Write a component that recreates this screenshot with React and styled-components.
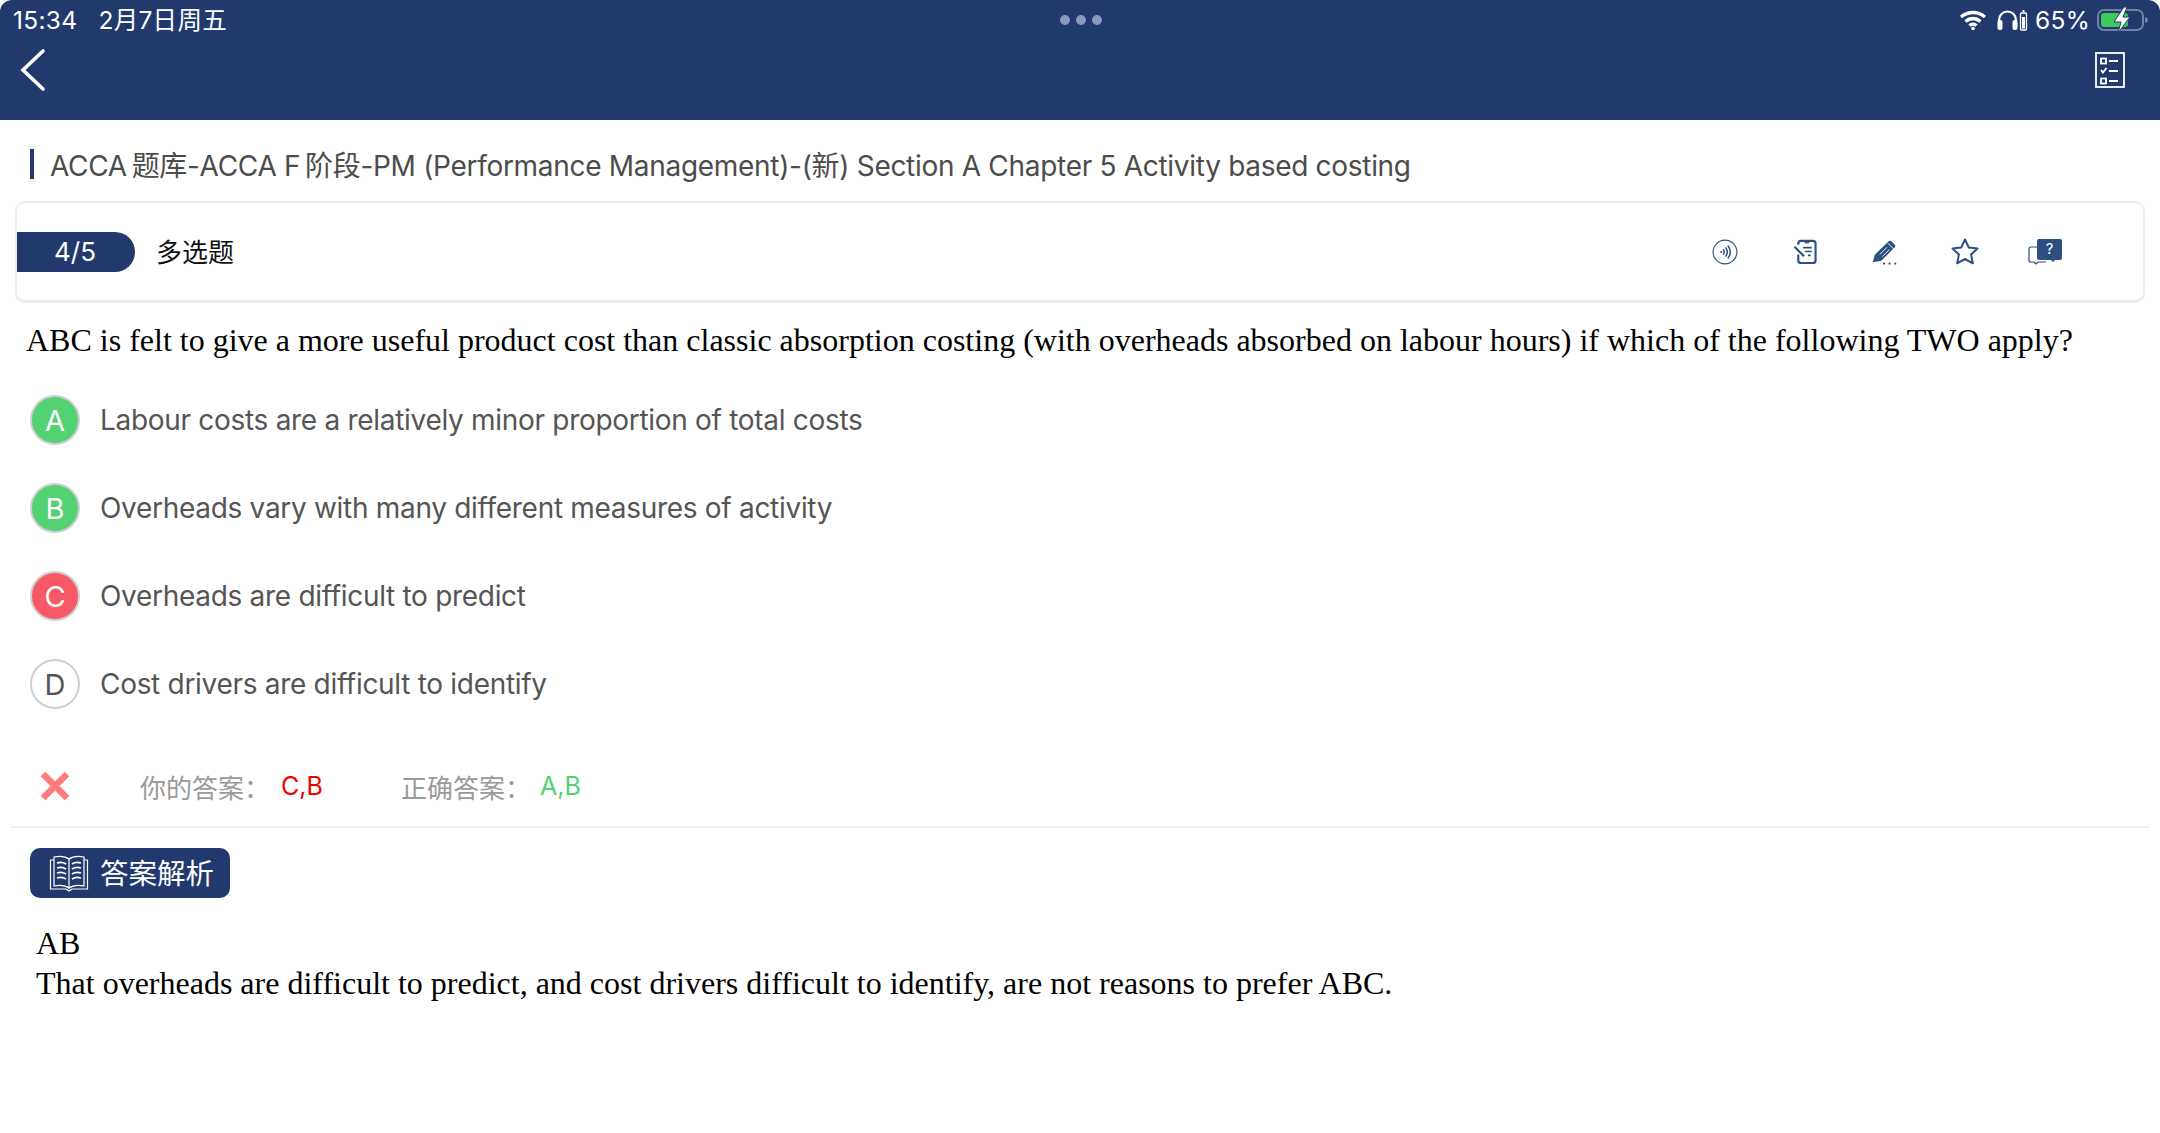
import React from "react";
import styled, { createGlobalStyle } from "styled-components";

const Global = createGlobalStyle`
  html, body { margin: 0; padding: 0; background: #fff; }
  #root { width: 2160px; height: 1133px; overflow: hidden; }
  * { box-sizing: border-box; }
`;
const SANS = `Inter, "Noto Sans CJK SC", sans-serif`;
const NAVY = "#21396d";

const Page = styled.div`
  width: 2160px; height: 1133px; background: #fff; font-family: ${SANS};
  display: flex; flex-direction: column;
`;
const Header = styled.header`
  height: 120px; background: ${NAVY}; color: #fff; display: flex; flex-direction: column;
  padding: 0 12px 0 13px; border-radius: 12px 12px 0 0;
`;
const StatusBar = styled.div`
  height: 40px; display: grid; grid-template-columns: 1fr auto 1fr; align-items: center;
  font-size: 24.500px; letter-spacing: 0.3px; line-height: 28px;
`;
const StatusLeft = styled.div`display: flex; gap: 21px; align-items: baseline; height: 28px;`;
const Dots = styled.div`
  display: flex; gap: 6px;
  & > i { width: 10px; height: 10px; border-radius: 50%; background: #8b9ab8; display: block; }
`;
const StatusRight = styled.div`
  display: flex; justify-content: flex-end; align-items: center; gap: 10px;
`;
const Percent = styled.span`margin: 0 -3px;`;
const NavBar = styled.div`
  height: 60px; display: flex; justify-content: space-between; align-items: center; padding: 0 23px 0 6px;
`;
const TitleRow = styled.div`
  height: 81px; display: flex; align-items: center; padding: 6px 0 0 30px; gap: 16px;
  font-size: 28px; letter-spacing: -0.3px; color: #4c4c4c; white-space: nowrap;
`;
const TitleBar = styled.span`width: 4px; height: 30px; background: ${NAVY}; flex: none;`;
const Card = styled.section`
  margin: 0 15px; height: 102px; border: 2px solid #eeeeee; border-bottom-width: 3px; border-radius: 10px;
  display: flex; align-items: center; justify-content: space-between; padding: 0 78px 0 0;
`;
const CardLeft = styled.div`display: flex; align-items: center; gap: 21px;`;
const Pill = styled.div`
  width: 118px; height: 40px; background: ${NAVY}; color: #fff; border-radius: 0 20px 20px 0;
  display: flex; align-items: center; justify-content: center; font-size: 26px; padding-right: 2px;
`;
const QType = styled.div`font-size: 26px; color: #111; padding-bottom: 2px;`;
const Tools = styled.div`display: flex; align-items: center; gap: 40px;`;
const Tool = styled.span`width: 40px; display: flex; justify-content: center; align-items: center;`;
const Question = styled.p`
  margin: 0; padding: 17px 0 0 26px; height: 92px; font: 32px/40px "Liberation Serif", serif; color: #000; white-space: nowrap;
`;
const Options = styled.ul`margin: 0; padding: 0 0 0 30px; list-style: none; display: flex; flex-direction: column; gap: 38px;`;
const Option = styled.li`display: flex; align-items: center; gap: 20px; height: 50px; font-size: 28px; letter-spacing: -0.3px; color: #555;`;
const Badge = styled.span`
  width: 50px; height: 50px; border-radius: 50%; border: 2px solid #cfcfcf; flex: none;
  display: flex; align-items: center; justify-content: center; font-size: 29px; letter-spacing: 0;
  background: ${p => p.$bg || "#fff"}; color: ${p => p.$bg ? "#fff" : "#555"};
`;
const Result = styled.div`
  margin: 0 10px; height: 119px; padding: 61px 0 0 30px; border-bottom: 2px solid #eef1f5;
`;
const ResultIn = styled.div`height: 32px; display: flex; align-items: center;`;
const CrossSlot = styled.span`width: 30px; height: 30px; margin-right: 70px; flex: none; display: flex;`;
const Label = styled.span`width: ${p => p.$w}px; font-size: 26px; color: #9a9a9a; flex: none;`;
const Answer = styled.span`width: 120px; font-size: 25px; color: ${p => p.$c}; flex: none;`;
const AnalysisTag = styled.div`
  margin: 20px 0 0 30px; width: 200px; height: 50px; background: ${NAVY}; color: #fff; border-radius: 10px;
  display: flex; align-items: center; gap: 11px; padding-left: 19px; font-size: 28.500px;
`;
const AnalysisLabel = styled.span`padding-bottom: 4px;`;
const Analysis = styled.div`
  padding: 25px 0 0 36px; font: 32px/40px "Liberation Serif", serif; color: #000;
`;

const Wifi = () => (
  <svg width="28" height="22" viewBox="0 0 28 22" fill="none" stroke="#fff" strokeWidth="3.400">
    <path d="M2 8c7-6 17-6 24 0M6.500 12.500c4.500-4 10.500-4 15 0M10.500 16.500c2-1.800 5-1.800 7 0" />
    <circle cx="14" cy="19.500" r="1.800" fill="#fff" stroke="none" />
  </svg>
);
const Phones = () => (
  <svg width="31" height="22" viewBox="0 0 31 22" fill="none">
    <path d="M2 19v-8a8.500 8.500 0 0 1 17 0v8" stroke="#fff" strokeWidth="2.200" />
    <rect x="0.500" y="11" width="5" height="10" rx="2" fill="#fff" />
    <rect x="15.500" y="11" width="5" height="10" rx="2" fill="#fff" />
    <rect x="23.500" y="4" width="6" height="17" rx="1" stroke="#fff" strokeWidth="1.300" />
    <rect x="25" y="8" width="3" height="11.500" fill="#fff" />
    <rect x="25.500" y="1" width="2" height="2" fill="#fff" />
  </svg>
);
const Battery = () => (
  <svg width="51" height="26" viewBox="0 0 51 26" fill="none">
    <rect x="1" y="3" width="45" height="20" rx="6" stroke="#71809f" strokeWidth="2" />
    <rect x="4" y="6" width="27" height="14" rx="3" fill="#3ec95c" />
    <path d="M48 10c2 .5 3 1.500 3 3s-1 2.500-3 3z" fill="#71809f" />
    <path d="M27 0 L17 15 h7 l-3 11 L33 10 h-7 l4 -10z" fill="#fff" stroke={NAVY} strokeWidth="1" />
  </svg>
);
const Back = () => (
  <svg width="28" height="46" viewBox="0 0 28 46" fill="none" stroke="#fff" strokeWidth="3.600" strokeLinecap="round">
    <path d="M24 4 L4 23 L24 42" />
  </svg>
);
const Checklist = () => (
  <svg width="30" height="36" viewBox="0 0 30 36" fill="none" stroke="#fff" strokeWidth="1.800">
    <rect x="1" y="1" width="28" height="34" />
    <rect x="6" y="6.500" width="5" height="5" />
    <path d="M14 9h9M14 19h9M14 29h9" />
    <path d="M6 18l2 2.500 3.500-4.500" strokeWidth="2" />
    <rect x="6" y="26.500" width="5" height="5" />
  </svg>
);
const Sound = () => (
  <svg width="26" height="26" viewBox="0 0 28 28" fill="none" stroke="#2c4f82">
    <circle cx="14" cy="14" r="12.800" strokeWidth="1.200" />
    <circle cx="10" cy="14" r="1.200" fill="#2c4f82" stroke="none" />
    <path d="M12 11c1.500 2 1.500 4 0 6M14.500 9c2.500 3.200 2.500 6.800 0 10M17 7c3.500 4.500 3.500 9.500 0 14" strokeWidth="1.600" />
  </svg>
);
const Note = () => (
  <svg width="24" height="25" viewBox="0 0 24 26" fill="none" stroke="#2c4f82" strokeWidth="2.200">
    <path d="M5 6V4.500A3 3 0 0 1 8 2h12a3 3 0 0 1 3 3v17a3 3 0 0 1-3 3H8a3 3 0 0 1-3-3v-6" />
    <path d="M12 2.500h4v1.500h-4z" fill="#2c4f82" strokeWidth="1" />
    <path d="M10 9h9M12 13h7M15 17h3" strokeWidth="1.800" />
    <path d="M1 8l10 10" />
  </svg>
);
const Pencil = () => (
  <svg width="26" height="28" viewBox="0 0 28 28" fill="#2c4f82">
    <path d="M1 25l2-8L18 2.500a2 2 0 0 1 2.800 0l3.700 3.700a2 2 0 0 1 0 2.800L10 23.500z" />
    <path d="M8.500 16.500l7.500-7.500M11 19l7.500-7.500M17 4.500l6 6" stroke="#fff" strokeWidth="1" />
    <circle cx="13" cy="26.500" r="1.200" /><circle cx="19" cy="26.500" r="1.200" /><circle cx="25" cy="26.500" r="1.200" />
  </svg>
);
const Star = () => (
  <svg width="28" height="27" viewBox="0 0 28 27" fill="none" stroke="#2c4f82" strokeWidth="2" strokeLinejoin="round">
    <path d="M14 1.500l3.800 8 8.700 1.100-6.400 6 1.700 8.700L14 21l-7.800 4.300 1.700-8.700-6.400-6 8.700-1.100z" />
  </svg>
);
const Ask = () => (
  <svg width="34" height="27" viewBox="0 0 34 27" fill="none">
    <path d="M9 9H3a2 2 0 0 0-2 2v11a2 2 0 0 0 2 2h3l2 2 2-2h8" stroke="#2c4f82" strokeWidth="1.200" />
    <path d="M11 1h21a2 2 0 0 1 2 2v17a2 2 0 0 1-2 2h-5l-2 2-2-2H11a2 2 0 0 1-2-2V3a2 2 0 0 1 2-2z" fill="#2c4f82" />
    <text x="21.500" y="16" fontSize="15" fill="#fff" textAnchor="middle" fontFamily="Inter, sans-serif">?</text>
  </svg>
);
const Cross = () => (
  <svg width="30" height="30" viewBox="0 0 30 30" stroke="#ff7b7b" strokeWidth="6.500">
    <path d="M3 3L27 27M27 3L3 27" />
  </svg>
);
const Book = () => (
  <svg width="40" height="40" viewBox="0 0 40 40" fill="none" stroke="#fff" strokeWidth="1.200">
    <path d="M20 6C16 3 10 3 5 4v29c5-1 11-1 15 2 4-3 10-3 15-2V4c-5-1-11-1-15 2z" />
    <path d="M20 6v30M5 7H1.500v29H17l3 2 3-2h15.500V7H35" />
    <path d="M8 10c3-1 6-1 9 1M8 15c3-1 6-1 9 1M8 20c3-1 6-1 9 1M8 25c3-1 6-1 9 1M23 11c3-2 6-2 9-1M23 16c3-2 6-2 9-1M23 21c3-2 6-2 9-1M23 26c3-2 6-2 9-1" strokeWidth="1.800" />
  </svg>
);

const OPTIONS = [
  ["A", "Labour costs are a relatively minor proportion of total costs", "#52d273"],
  ["B", "Overheads vary with many different measures of activity", "#52d273"],
  ["C", "Overheads are difficult to predict", "#f75966"],
  ["D", "Cost drivers are difficult to identify", ""],
];

export default function App() {
  return (
    <Page>
      <Global />
      <Header>
        <StatusBar>
          <StatusLeft><span>15:34</span><span>2月7日周五</span></StatusLeft>
          <Dots><i /><i /><i /></Dots>
          <StatusRight><Wifi /><Phones /><Percent>65%</Percent><Battery /></StatusRight>
        </StatusBar>
        <NavBar><Back /><Checklist /></NavBar>
      </Header>
      <TitleRow>
        <TitleBar />
        <span>{"ACCA\u2009题库-ACCA F\u2009阶段-PM (Performance Management)-(新) Section A Chapter 5 Activity based costing"}</span>
      </TitleRow>
      <Card>
        <CardLeft><Pill>4/5</Pill><QType>多选题</QType></CardLeft>
        <Tools>
          <Tool><Sound /></Tool><Tool><Note /></Tool><Tool><Pencil /></Tool><Tool><Star /></Tool><Tool><Ask /></Tool>
        </Tools>
      </Card>
      <Question>ABC is felt to give a more useful product cost than classic absorption costing (with overheads absorbed on labour hours) if which of the following TWO apply?</Question>
      <Options>
        {OPTIONS.map(([k, t, c]) => (
          <Option key={k}><Badge $bg={c}>{k}</Badge><span>{t}</span></Option>
        ))}
      </Options>
      <Result>
        <ResultIn>
          <CrossSlot><Cross /></CrossSlot>
          <Label $w={141}>你的答案：</Label><Answer $c="#f00000">C,B</Answer>
          <Label $w={139}>正确答案：</Label><Answer $c="#52d273">A,B</Answer>
        </ResultIn>
      </Result>
      <AnalysisTag><Book /><AnalysisLabel>答案解析</AnalysisLabel></AnalysisTag>
      <Analysis>
        <div>AB</div>
        <div>That overheads are difficult to predict, and cost drivers difficult to identify, are not reasons to prefer ABC.</div>
      </Analysis>
    </Page>
  );
}
